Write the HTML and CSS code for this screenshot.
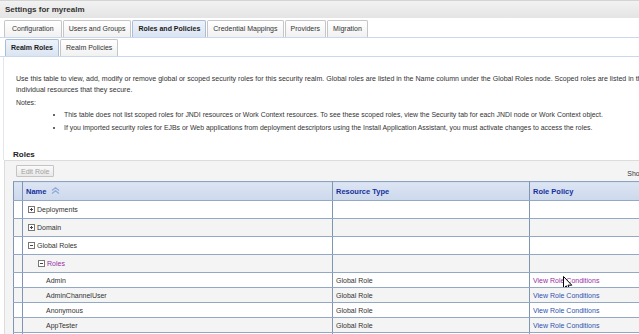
FILE: index.html
```html
<!DOCTYPE html>
<html lang="en">

<head>
  <meta charset="UTF-8" />
  <title>Settings for myrealm</title>
  <link rel="stylesheet" href="styles.css">
</head>

<body>
  <div class="page">
    <div class="title-bar">Settings for myrealm</div>

    <div class="tabs">
      <span class="tab">Configuration</span>
      <span class="tab">Users and Groups</span>
      <span class="tab active">Roles and Policies</span>
      <span class="tab">Credential Mappings</span>
      <span class="tab">Providers</span>
      <span class="tab">Migration</span>
    </div>

    <div class="tabs subtabs">
      <span class="tab active">Realm Roles</span>
      <span class="tab">Realm Policies</span>
    </div>

    <div class="content">
      <p class="intro">Use this table to view, add, modify or remove global or scoped security roles for this security realm. Global roles are listed in the Name column under the Global Roles node. Scoped roles are listed in the<br>individual resources that they secure.</p>
      <p class="notes">Notes:</p>
      <ul class="note-list">
        <li>This table does not list scoped roles for JNDI resources or Work Context resources. To see these scoped roles, view the Security tab for each JNDI node or Work Context object.</li>
        <li>If you imported security roles for EJBs or Web applications from deployment descriptors using the Install Application Assistant, you must activate changes to access the roles.</li>
      </ul>

      <h3 class="section-title">Roles</h3>
    </div>

    <div class="panel">
      <div class="toolbar">
        <button class="btn" disabled>Edit Role</button>
        <span class="showing">Showing 1 to 10 of 12</span>
      </div>

      <table class="grid">
        <colgroup>
          <col class="c-check">
          <col class="c-name">
          <col class="c-type">
          <col class="c-policy">
        </colgroup>
        <thead>
          <tr>
            <th></th>
            <th>Name
              <svg class="sort" width="9" height="7" viewBox="0 0 9 7">
                <path d="M1 3.5 L4.5 0.8 L8 3.5 M1 6.5 L4.5 3.8 L8 6.5" fill="none" stroke="#8fa9d8" stroke-width="1.2" />
              </svg>
            </th>
            <th>Resource Type</th>
            <th>Role Policy</th>
          </tr>
        </thead>
        <tbody>
          <tr class="node">
            <td></td>
            <td class="lvl1"><i class="tog plus"></i>Deployments</td>
            <td></td>
            <td></td>
          </tr>
          <tr class="node alt">
            <td></td>
            <td class="lvl1"><i class="tog plus"></i>Domain</td>
            <td></td>
            <td></td>
          </tr>
          <tr class="node">
            <td></td>
            <td class="lvl1"><i class="tog"></i>Global Roles</td>
            <td></td>
            <td></td>
          </tr>
          <tr class="node alt">
            <td></td>
            <td class="lvl2"><i class="tog"></i><a class="visited" href="#">Roles</a></td>
            <td></td>
            <td></td>
          </tr>
          <tr class="leaf">
            <td></td>
            <td class="lvl3">Admin</td>
            <td>Global Role</td>
            <td class="hover-cell"><a class="visited" href="#">View Role Conditions</a>
              <svg class="cursor" width="10" height="16" viewBox="0 0 10 16">
                <path d="M0.5 0.5 L0.5 12.5 L3.3 9.8 L5.3 14.6 L7 13.9 L5 9.2 L8.8 9.2 Z" fill="#fff" stroke="#000" stroke-width="1" />
              </svg>
            </td>
          </tr>
          <tr class="leaf alt">
            <td></td>
            <td class="lvl3">AdminChannelUser</td>
            <td>Global Role</td>
            <td><a href="#">View Role Conditions</a></td>
          </tr>
          <tr class="leaf">
            <td></td>
            <td class="lvl3">Anonymous</td>
            <td>Global Role</td>
            <td><a href="#">View Role Conditions</a></td>
          </tr>
          <tr class="leaf alt">
            <td></td>
            <td class="lvl3">AppTester</td>
            <td>Global Role</td>
            <td><a href="#">View Role Conditions</a></td>
          </tr>
          <tr class="leaf">
            <td></td>
            <td class="lvl3"></td>
            <td></td>
            <td></td>
          </tr>
        </tbody>
      </table>
    </div>
  </div>
</body>

</html>
```

FILE: styles.css
```css
html {
  overflow: hidden;
}

body {
  margin: 0;
  font-family: "Liberation Sans", Arial, Helvetica, sans-serif;
  font-size: 7px;
  color: #333;
  background: white;
}

.page {
  width: 760px;
}

.title-bar {
  height: 17px;
  line-height: 18px;
  padding-left: 5px;
  border-top: 1px solid #d4d4d4;
  background: linear-gradient(#f2f2f2, #e4e4e4);
  font-size: 8px;
  font-weight: 700;
  color: #333;
}

.tabs {
  display: flex;
  gap: 1px;
  padding: 2px 0 0 4px;
  border-bottom: 1px solid #c9d8ec;
}

.tab {
  height: 16px;
  line-height: 16px;
  padding: 0 5px;
  border: 1px solid #c6c6c6;
  border-bottom: none;
  border-radius: 2px 2px 0 0;
  background: linear-gradient(#ffffff, #f1f1f1);
  color: #333;
  white-space: nowrap;
}

.tabs > .tab:first-child {
  padding: 0 7px;
}

.tab.active {
  font-weight: 700;
  color: #1a1a1a;
  border-color: #aabcd6;
  background: linear-gradient(#eef3fa, #dae4f2);
}

.subtabs {
  padding-top: 1px;
  padding-left: 5px;
}

.subtabs > .tab:first-child {
  padding: 0 5px;
}

.content {
  margin-left: 3px;
  padding: 1px 0 0 12px;
  border-left: 1px solid #e3e6ec;
}

.intro {
  margin: 15px 0 0;
  font-size: 7.05px;
  line-height: 11px;
  white-space: nowrap;
}

.notes {
  margin: 4px 0 0;
  font-size: 6.9px;
}

.note-list {
  margin: 2px 0 0;
  padding-left: 48px;
  font-size: 6.9px;
  white-space: nowrap;
}

.note-list li {
  line-height: 13px;
}

.section-title {
  margin: 16px 0 0 -3px;
  font-size: 8px;
  font-weight: 700;
  color: #222;
  line-height: 10px;
}

.panel {
  margin: 0 0 0 4px;
  padding: 0 0 0 8px;
  background: #f4f4f4;
  border-top: 1px solid #dcdcdc;
  border-left: 1px solid #dcdcdc;
}

.toolbar {
  display: flex;
  align-items: center;
  justify-content: space-between;
  height: 20px;
  padding-left: 3px;
}

.btn {
  height: 12px;
  padding: 0 4px;
  font-family: inherit;
  font-size: 7px;
  color: #a0a0a0;
  background: linear-gradient(#fafafa, #e9e9e9);
  border: 1px solid #c4c4c4;
  border-radius: 1px;
}

.showing {
  font-size: 6.9px;
  color: #333;
  margin-right: 66px;
  padding-top: 4px;
}

.grid {
  border-collapse: collapse;
  table-layout: fixed;
  width: 730px;
  background: white;
}

.c-check { width: 9px; }
.c-name { width: 310px; }
.c-type { width: 197px; }
.c-policy { width: 214px; }

.grid th,
.grid td {
  border: 1px solid #92a8c4;
  border-left-color: #7f95b3;
  border-right-color: #7f95b3;
  padding: 0 0 0 3px;
  text-align: left;
  white-space: nowrap;
  overflow: hidden;
}

.grid th {
  height: 18px;
  font-size: 7.5px;
  font-weight: 700;
  color: #15309b;
  background: linear-gradient(#dce5f3, #ccd8ec);
  border-top-color: #8ea3c2;
}

.sort {
  margin-left: 2px;
  vertical-align: -0.5px;
}

.grid td {
  color: #333;
}

.node td {
  height: 17px;
}

.leaf td {
  height: 14px;
}

.alt td {
  background: #f4f4f4;
}

.lvl1 {
  padding-left: 5px !important;
}

.lvl2 {
  padding-left: 15px !important;
}

.lvl3 {
  padding-left: 23px !important;
}

.tog {
  display: inline-block;
  position: relative;
  width: 5px;
  height: 5px;
  margin-right: 2px;
  border: 1px solid #777;
  background: white;
  vertical-align: -1px;
}

.tog::before {
  content: "";
  position: absolute;
  left: 1px;
  top: 2px;
  width: 3px;
  height: 1px;
  background: #444;
}

.tog.plus::after {
  content: "";
  position: absolute;
  left: 2px;
  top: 1px;
  width: 1px;
  height: 3px;
  background: #444;
}

.grid a {
  color: #2d52b0;
  text-decoration: none;
}

.grid a.visited {
  color: #9a2ea6;
}

.hover-cell {
  position: relative;
}

.cursor {
  position: absolute;
  left: 33px;
  top: 3px;
}
```
